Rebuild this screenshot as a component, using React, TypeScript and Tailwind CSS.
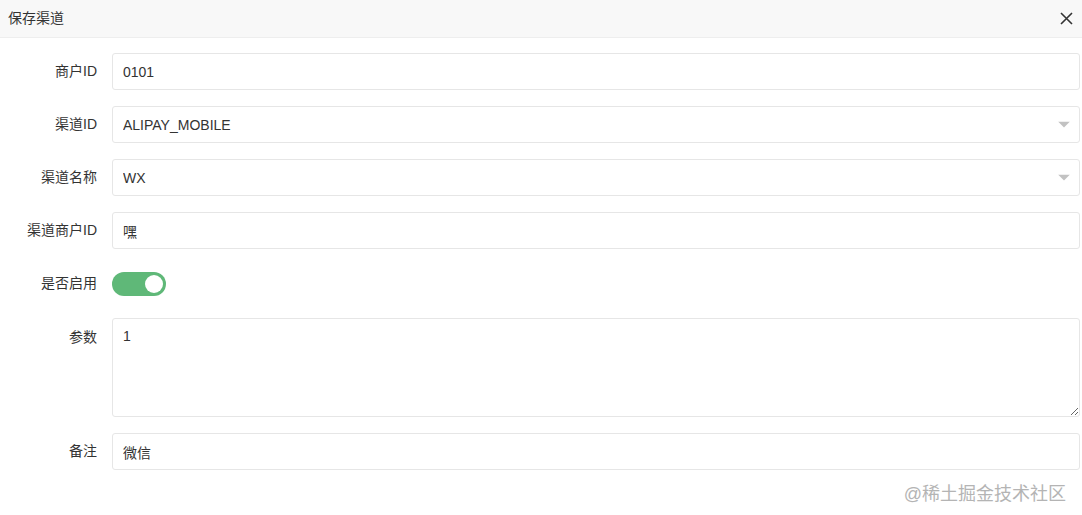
import React, { useState } from 'react';

const font = { fontFamily: '"Microsoft YaHei", "Liberation Sans", "Noto Sans CJK SC", sans-serif' };

const Field: React.FC<{ label: string; children: React.ReactNode; top?: boolean }> = ({ label, children, top }) => (
  <div className={`flex ${top ? 'items-start' : 'items-center'}`}>
    <label className={`w-[97px] shrink-0 text-right text-[14px] text-[#333] ${top ? 'pt-[9px]' : ''}`}>{label}</label>
    <div className="ml-[15px] flex-1 min-w-0 mr-[2px]">{children}</div>
  </div>
);

const inputCls =
  'h-[37px] w-full rounded-[3px] border border-[#e6e6e6] bg-white px-[10px] text-[14px] text-[#333] outline-none';

const Caret = () => (
  <span className="pointer-events-none absolute right-[10px] top-1/2 -translate-y-1/2">
    <svg width="12" height="7" viewBox="0 0 12 7">
      <path d="M0 0 L12 0 L6 6 Z" fill="#c2c2c2" />
    </svg>
  </span>
);

export default function App() {
  const [enabled, setEnabled] = useState(true);

  return (
    <div className="relative h-[515px] w-[1082px] overflow-hidden bg-white" style={font}>
      <div className="flex h-[38px] items-center justify-between border-b border-[#eee] bg-[#f8f8f8] pl-[8px] pr-[6px]">
        <span className="text-[14px] text-[#333]">保存渠道</span>
        <button className="flex h-[20px] w-[20px] items-center justify-center text-[#333]">
          <svg width="13" height="13" viewBox="0 0 13 13">
            <path d="M1 1 L12 12 M12 1 L1 12" stroke="#333" strokeWidth="1.6" />
          </svg>
        </button>
      </div>

      <div className="flex flex-col gap-[16px] pt-[15px]">
        <Field label="商户ID">
          <input className={inputCls} defaultValue="0101" />
        </Field>
        <Field label="渠道ID">
          <div className="relative">
            <input className={inputCls} defaultValue="ALIPAY_MOBILE" readOnly />
            <Caret />
          </div>
        </Field>
        <Field label="渠道名称">
          <div className="relative">
            <input className={inputCls} defaultValue="WX" readOnly />
            <Caret />
          </div>
        </Field>
        <Field label="渠道商户ID">
          <input className={inputCls} defaultValue="嘿" />
        </Field>
        <div className="flex h-[37px] items-center">
          <label className="w-[97px] shrink-0 text-right text-[14px] text-[#333]">是否启用</label>
          <button
            onClick={() => setEnabled(!enabled)}
            className={`ml-[15px] mt-[1px] flex h-[24px] w-[54px] items-center rounded-full px-[3px] ${
              enabled ? 'justify-end bg-[#5fb878]' : 'justify-start bg-[#d2d2d2]'
            }`}
          >
            <span className="h-[18px] w-[18px] rounded-full bg-white" />
          </button>
        </div>
        <Field label="参数" top>
          <textarea
            className="block h-[99px] w-full resize-y rounded-[3px] border border-[#e6e6e6] bg-white px-[10px] py-[7px] text-[14px] text-[#333] outline-none"
            defaultValue="1"
          />
        </Field>
        <Field label="备注">
          <input className={inputCls} defaultValue="微信" />
        </Field>
      </div>

      <div className="absolute bottom-[7px] right-[16px] text-[18px] text-[#b4b4b4]">@稀土掘金技术社区</div>
    </div>
  );
}
